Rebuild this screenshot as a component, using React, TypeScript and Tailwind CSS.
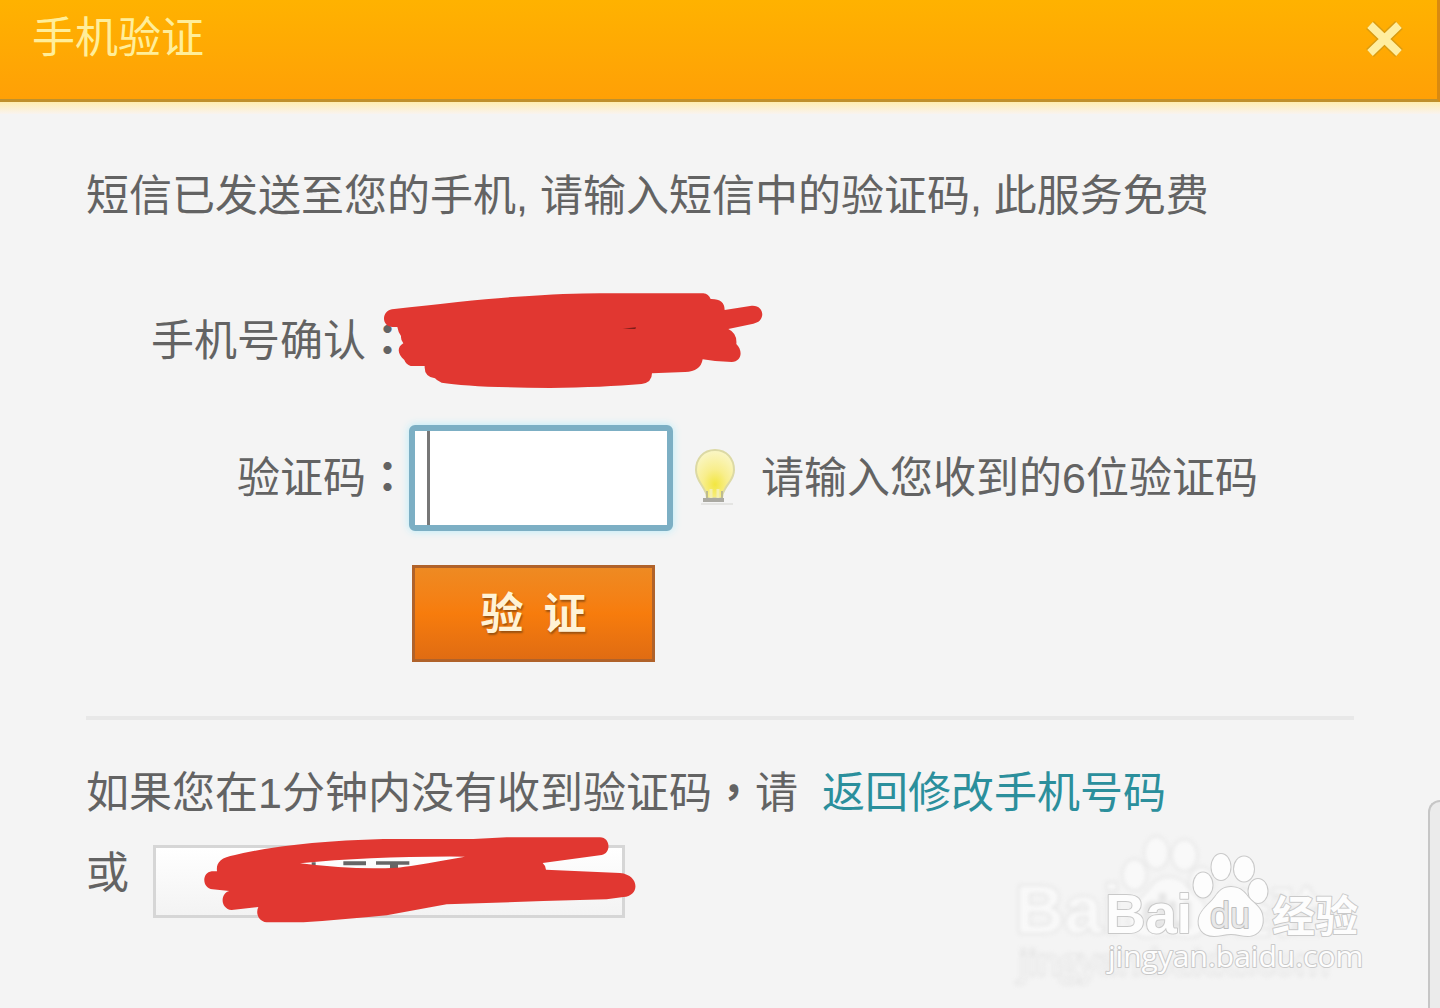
import { useId, useState } from 'react'

function CloseIcon() {
  return (
    <svg width="38" height="38" viewBox="0 0 38 38" fill="none" aria-hidden="true">
      <path d="M4 5 33 33M33 5 4 33" stroke="#d99c12" strokeWidth="11" />
      <path d="M4 5 33 33M33 5 4 33" stroke="#ffeeA0" strokeWidth="8" />
    </svg>
  )
}

function BulbIcon() {
  return (
    <svg className="shrink-0" width="44" height="62" viewBox="0 0 44 62" aria-hidden="true">
      <defs>
        <radialGradient id="bulb" cx="0.5" cy="0.72" r="0.7">
          <stop offset="0" stopColor="#f2e640" />
          <stop offset="0.45" stopColor="#f8ee8c" />
          <stop offset="1" stopColor="#faf6c4" />
        </radialGradient>
      </defs>
      <path
        d="M22 3C10 3 3 12 3 23c0 9 5 13 8 19 2 3 3 5 3 9h15c0-4 1-6 3-9 3-6 9-10 9-19C41 12 34 3 22 3Z"
        fill="url(#bulb)"
        stroke="#dcd9a4"
        strokeWidth="2"
      />
      <path d="M18 51v-9M25 51v-9" fill="none" stroke="#f4efb0" strokeWidth="3" />
      <path d="M14 44v7M29 44v7" stroke="#bdbb90" strokeWidth="2" />
      <path d="M10 53h21" stroke="#aaa9a2" strokeWidth="4" />
      <path d="M8 57h32" stroke="#e4e4e2" strokeWidth="2" />
    </svg>
  )
}

function PhoneMask() {
  return (
    <svg className="absolute -left-[39px] -top-[31px]" width="410" height="120" viewBox="0 0 1230 360" aria-hidden="true">
      <path
        d="M66 88Q300 60 440 50Q620 38 720 40L1000 40Q1016 42 1022 57Q1064 56 1064 90Q1100 84 1145 77C1185 74 1188 126 1150 131L1075 147Q1102 160 1099 192C1120 212 1115 245 1085 246Q1040 246 998 238Q992 275 945 276L846 280Q846 308 815 312Q700 322 540 324Q300 322 215 308Q200 302 195 295Q162 290 164 258L122 258Q108 254 103 240C80 220 82 200 100 190Q92 180 93 168Q84 155 82 141L66 141C34 138 34 94 66 88Z"
        fill="#e13731"
      />
      <path d="M758 146 798 142 796 147Z" fill="#7a1d1a" />
    </svg>
  )
}

function ResendMask() {
  return (
    <svg className="pointer-events-none absolute -left-[13px] -top-[25px]" width="520" height="120" viewBox="0 0 1560 360" aria-hidden="true">
      <path d="M515 127h12v8h-12zM610 124h68v12h-68zM708 124h100v10h-100zM750 134h24v10h-24z" fill="#666" />
      <path
        fillRule="evenodd"
        d="M285 105Q450 65 730 57L1000 57L1100 52L1380 52C1412 52 1414 100 1385 105L1208 129Q1218 138 1218 149L1440 159C1500 165 1500 228 1450 231L1400 238L1210 243L920 253L740 286Q600 300 490 307L380 307C355 304 346 280 355 261L275 270C240 266 240 220 268 213L218 208C185 204 185 158 215 154L231 154C228 130 240 112 285 105ZM480 130Q640 150 770 143Q800 141 975 110Q700 108 480 130Z"
        fill="#e13731"
      />
    </svg>
  )
}

function BaiduMark({ className }: { className: string }) {
  return (
    <svg className={className} viewBox="0 0 270 140" aria-hidden="true">
      <g fill="#fdfdfd" stroke="#c9c9c9" strokeWidth="2" strokeLinejoin="round" paintOrder="stroke">
        <text x="5" y="88" className="font-['Liberation_Sans'] text-[56px] font-bold">Bai</text>
        <ellipse cx="103" cy="40" rx="9.5" ry="12.5" />
        <ellipse cx="121" cy="22" rx="9.5" ry="13" />
        <ellipse cx="144" cy="24" rx="10" ry="12.5" />
        <ellipse cx="158" cy="46" rx="9.5" ry="12" />
        <path d="M131 42c8 0 13 4 17 10 4 5 12 9 14 17 3 12-3 22-14 22-6 0-11-2-17-2s-11 2-17 2c-12 0-17-9-15-18 2-9 11-14 16-21 4-6 8-10 16-10Z" />
        <text x="172" y="87" className="font-['Noto_Sans_CJK_SC'] text-[43px] font-bold">经验</text>
        <text x="110" y="83" fill="#e8e8e8" stroke="#bdbdbd" className="font-['Liberation_Sans'] text-[36px]">du</text>
        <text x="8" y="122" className="font-['Open_Sans'] text-[30px]">jingyan.baidu.com</text>
      </g>
    </svg>
  )
}

// full-width punctuation sits in the middle of its cell
function Punct({ children }: { children: string }) {
  return <span className="font-['Noto_Sans_CJK_TC'] leading-none font-bold">{children}</span>
}

export default function App() {
  const codeId = useId()
  const [code, setCode] = useState('')

  return (
    <div className="relative min-h-screen overflow-hidden bg-[#f4f4f4] font-['Liberation_Sans','Noto_Sans_CJK_SC',sans-serif] text-[43px] leading-[60px] text-[#636363]">
      <header className="flex h-[102px] items-start justify-between border-r-3 border-b-3 border-r-[#d98a10] border-b-[#bf902c] bg-linear-to-b from-[#ffb200] to-[#ffa006] pt-2 pr-[33px] pl-8 text-[#ffee9a]">
        <h1>手机验证</h1>
        <button type="button" aria-label="关闭" className="mt-3">
          <CloseIcon />
        </button>
      </header>
      <div className="h-3 bg-linear-to-b from-[#ffedb0] to-[#f9f3ef]" />

      <main className="px-[86px] pt-[52px]">
        <p>短信已发送至您的手机, 请输入短信中的验证码, 此服务免费</p>

        <form onSubmit={(e) => e.preventDefault()}>
          <div className="mt-[85px] flex">
            <span className="w-[323px] shrink-0 text-right">
              手机号确认<Punct>：</Punct>
            </span>
            <div className="relative h-[60px]">
              <PhoneMask />
            </div>
          </div>

          <div className="mt-[54px] flex items-center">
            <label htmlFor={codeId} className="w-[323px] shrink-0 text-right">
              验证码<Punct>：</Punct>
            </label>
            <div className="relative shrink-0">
              <input
                id={codeId}
                type="text"
                maxLength={6}
                value={code}
                onChange={(e) => setCode(e.target.value)}
                className="block h-[106px] w-[264px] rounded-md border-6 border-[#7cafc4] bg-white px-4 shadow-[0_0_8px_#b4ecfa] outline-none"
              />
              {!code && <span className="absolute top-[6px] bottom-[6px] left-[18px] w-[3px] bg-[#777]" />}
            </div>
            <div className="ml-5 flex items-center gap-6 whitespace-nowrap">
              <BulbIcon />
              <span>请输入您收到的6位验证码</span>
            </div>
          </div>

          <button
            type="submit"
            className="mt-[34px] ml-[326px] flex h-[97px] w-[243px] items-center justify-center gap-5 border-3 border-[#b0622a] bg-linear-to-b from-[#ee8a22] via-[#f77c0c] to-[#e06c12] font-bold text-[#fff3d6] [text-shadow:1px_2px_2px_#9a5210]"
          >
            <span>验</span>
            <span>证</span>
          </button>
        </form>

        <hr className="mt-[54px] h-1 border-0 bg-[#e8e8e8]" />

        <p className="mt-[43px]">
          如果您在1分钟内没有收到验证码<Punct>，</Punct>请
          <a href="#phone" className="ml-6 text-[#2b8f9c]">返回修改手机号码</a>
        </p>
        <div className="mt-5 flex items-start gap-6">
          <span>或</span>
          <div className="relative mt-0.5">
            <button
              type="button"
              aria-label="重新发送"
              className="block h-[73px] w-[472px] border-3 border-[#d6d6d6] bg-linear-to-b from-white to-[#f3f3f3]"
            />
            <ResendMask />
          </div>
        </div>
      </main>

      <BaiduMark className="pointer-events-none absolute right-[102px] bottom-[11px] w-[329px] opacity-60 blur-[2px]" />
      <BaiduMark className="pointer-events-none absolute right-[70px] bottom-[23px] w-[270px]" />
      <div className="absolute -right-1 bottom-0 h-[208px] w-4 rounded-tl-xl border-t-2 border-l-2 border-[#c6c6c6] bg-[#ebebeb]" />
    </div>
  )
}
